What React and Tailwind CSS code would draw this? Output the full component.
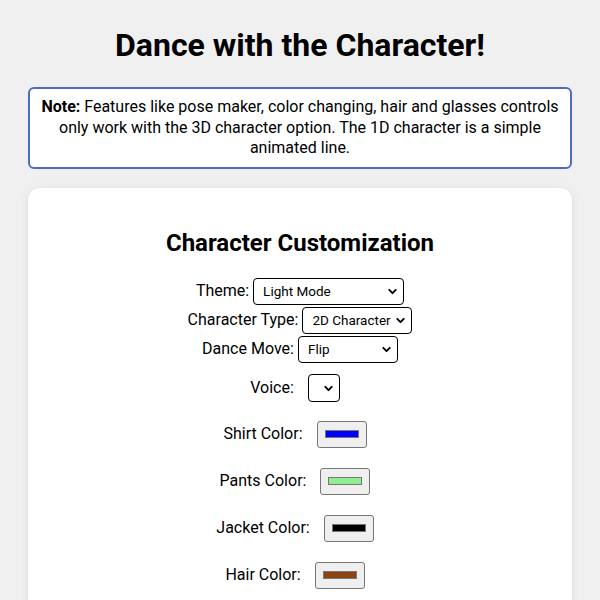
import React from "react";
import { ChevronDown } from "lucide-react";

function Select({ value, width, options = [] }) {
  return (
    <div className="relative" style={{ width }}>
      <select
        defaultValue={value}
        className="appearance-none w-full h-[27px] pl-[9px] pr-4 text-[13.5px] border border-black rounded-[4px] bg-white text-black"
      >
        {options.map((o) => (
          <option key={o}>{o}</option>
        ))}
      </select>
      <ChevronDown
        size={13}
        strokeWidth={3.5}
        className="absolute right-[5px] top-[7px] pointer-events-none text-black"
      />
    </div>
  );
}

function ColorSwatch({ color }) {
  return (
    <div className="w-[50px] h-[27px] border border-[#767676] rounded-[3px] bg-[#efefef] flex items-center justify-center">
      <div className="w-[34px] h-[8px] border border-[#777]" style={{ background: color }} />
    </div>
  );
}

const colors = [
  { label: "Shirt Color:", color: "#0000ff" },
  { label: "Pants Color:", color: "#90ee90" },
  { label: "Jacket Color:", color: "#000000" },
  { label: "Hair Color:", color: "#8b4513" },
];

export default function App() {
  return (
    <div
      className="min-h-[600px] bg-[#f0f0f0] px-[28px] pt-[26px] text-black"
      style={{ fontFamily: "Roboto, 'Liberation Sans', sans-serif" }}
    >
      <h1 className="text-[32px] font-bold text-center leading-[38px]">Dance with the Character!</h1>

      <div className="mt-[23px] border-2 border-[#4a6cc4] rounded-[6px] bg-white px-[8px] py-[8px] text-center text-[16px] leading-[20.5px]">
        <b>Note:</b> Features like pose maker, color changing, hair and glasses controls only work with the 3D
        character option. The 1D character is a simple animated line.
      </div>

      <div className="mt-[19px] bg-white rounded-[12px] shadow-[0_2px_8px_rgba(0,0,0,0.1)] pt-[41px] pb-10 flex flex-col items-center text-[16px]">
        <h2 className="text-[24px] font-bold leading-[28px]">Character Customization</h2>

        <div className="mt-[21px] flex flex-col items-center gap-[2px]">
          <label className="flex items-center gap-[4px]">
            Theme:
            <Select value="Light Mode" width={151} options={["Light Mode", "Dark Mode"]} />
          </label>
          <label className="flex items-center gap-[4px]">
            Character Type:
            <Select value="2D Character" width={110} options={["1D Character", "2D Character", "3D Character"]} />
          </label>
          <label className="flex items-center gap-[4px]">
            Dance Move:
            <Select value="Flip" width={100} options={["Flip", "Spin", "Jump"]} />
          </label>
        </div>

        <label className="mt-[11px] pr-[10px] flex items-center gap-[14px]">
          Voice:
          <div className="relative w-[32px] h-[28px] border border-black rounded-[4px]">
            <ChevronDown
              size={13}
              strokeWidth={3.5}
              className="absolute left-[13px] top-[7px] text-black"
            />
          </div>
        </label>

        <div className="mt-[19px] flex flex-col items-center gap-[20px]">
          {colors.map((c) => (
            <label key={c.label} className="pr-[10px] flex items-center gap-[14px]">
              {c.label}
              <ColorSwatch color={c.color} />
            </label>
          ))}
        </div>
      </div>
    </div>
  );
}
